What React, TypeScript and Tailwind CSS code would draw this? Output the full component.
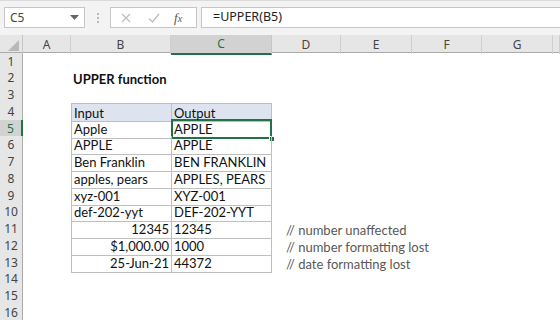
import React from 'react';

const cols = ['A', 'B', 'C', 'D', 'E', 'F', 'G', 'H'];

type Cell = { text: string; right?: boolean; bold?: boolean; note?: boolean };

// sheet content by row number -> column letter
const data: Record<number, Record<string, Cell>> = {
  2: { B: { text: 'UPPER function', bold: true } },
  4: { B: { text: 'Input' }, C: { text: 'Output' } },
  5: { B: { text: 'Apple' }, C: { text: 'APPLE' } },
  6: { B: { text: 'APPLE' }, C: { text: 'APPLE' } },
  7: { B: { text: 'Ben Franklin' }, C: { text: 'BEN FRANKLIN' } },
  8: { B: { text: 'apples, pears' }, C: { text: 'APPLES, PEARS' } },
  9: { B: { text: 'xyz-001' }, C: { text: 'XYZ-001' } },
  10: { B: { text: 'def-202-yyt' }, C: { text: 'DEF-202-YYT' } },
  11: { B: { text: '12345', right: true }, C: { text: '12345' }, D: { text: '// number unaffected', note: true } },
  12: { B: { text: '$1,000.00', right: true }, C: { text: '1000' }, D: { text: '// number formatting lost', note: true } },
  13: { B: { text: '25-Jun-21', right: true }, C: { text: '44372' }, D: { text: '// date formatting lost', note: true } },
};

const rows = Array.from({ length: 16 }, (_, i) => i + 1);

const gridCols = 'grid grid-cols-[23px_48px_100px_101px_69px_71px_70px_71px_1fr]';

function Toolbar() {
  return (
    <div className="h-[35px] bg-[#f3f3f3] border-t border-[#dadada] flex items-start pt-[6px] font-['Noto_Sans',sans-serif] text-[12px] text-[#444]">
      <div className="ml-[4px] w-[81px] h-[21px] bg-white border border-[#c6c6c6] flex items-center justify-between pl-[5px] pr-[5px]">
        <span>C5</span>
        <svg width="9" height="5" viewBox="0 0 9 5"><path d="M0 0h9L4.5 5z" fill="#666" /></svg>
      </div>
      <div className="w-[25px] h-[21px] flex flex-col items-center justify-center gap-[2px]">
        <span className="w-[2px] h-[2px] bg-[#bbb]" />
        <span className="w-[2px] h-[2px] bg-[#bbb]" />
        <span className="w-[2px] h-[2px] bg-[#bbb]" />
      </div>
      <div className="w-[87px] h-[21px] bg-white border border-[#c6c6c6] flex items-center">
        <svg className="ml-[10px]" width="10" height="10" viewBox="0 0 10 10">
          <path d="M1 1l8 8M9 1l-8 8" stroke="#bdbdbd" strokeWidth="1.2" />
        </svg>
        <svg className="ml-[17px]" width="12" height="10" viewBox="0 0 12 10">
          <path d="M1 5.5l3.5 3.5L11 1" stroke="#bdbdbd" strokeWidth="1.3" fill="none" />
        </svg>
        <span className="ml-[14px] italic font-['Liberation_Serif',serif] text-[13px] text-[#555]">
          f<span className="text-[10px]">x</span>
        </span>
      </div>
      <div className="ml-[4px] flex-1 h-[21px] bg-white border border-[#c6c6c6] border-r-0 flex items-center pl-[11px] font-['Noto_Sans',sans-serif] text-[12.5px] text-[#222]">
        =UPPER(B5)
      </div>
    </div>
  );
}

function HeaderRow() {
  return (
    <div className={`${gridCols} h-[18px] bg-[#e6e6e6] border-b border-[#ababab] font-['Noto_Sans',sans-serif] text-[12px] text-[#444]`}>
      <div className="relative border-r border-[#c6c6c6]">
        <svg className="absolute right-[3px] bottom-[3px]" width="11" height="11" viewBox="0 0 11 11">
          <path d="M11 0v11H0z" fill="#b8b8b8" />
        </svg>
      </div>
      {cols.map((c) =>
        c === 'C' ? (
          <div key={c} className="flex items-center justify-center bg-[#d2d2d2] text-[#217346] border-b-2 border-[#217346] border-r border-r-[#c6c6c6] -mb-px">
            {c}
          </div>
        ) : (
          <div key={c} className="flex items-center justify-center border-r border-[#cfcfcf]">
            {c === 'H' ? '' : c}
          </div>
        )
      )}
    </div>
  );
}

function SheetRow({ n }: { n: number }) {
  const h = n % 4 === 1 ? 'h-[16px]' : 'h-[17px]';
  const inTable = n >= 4 && n <= 13;
  const r = data[n] || {};
  return (
    <div className={`${gridCols} ${h}`}>
      {n === 5 ? (
        <div className="flex items-center justify-center bg-[#d2d2d2] text-[#217346] border-r-2 border-[#217346] border-b border-b-[#d8d8d8] font-['Noto_Sans',sans-serif] text-[12px]">
          {n}
        </div>
      ) : (
        <div className="flex items-center justify-center bg-[#e6e6e6] text-[#444] border-r border-[#ababab] border-b border-b-[#d8d8d8] font-['Noto_Sans',sans-serif] text-[12px]">
          {n}
        </div>
      )}
      {cols.map((c) => {
        const cell = r[c];
        const tableCell = inTable && (c === 'B' || c === 'C');
        let cls = 'relative flex items-center whitespace-nowrap overflow-visible font-[Lato,sans-serif] text-[13px] leading-none pt-[1px] text-[#111] px-[2px]';
        if (tableCell) {
          cls += ' border-b border-[#bfbfbf] border-l';
          if (c === 'C') cls += ' border-r';
          if (n === 4) cls += ' border-t bg-[#dde4f0]';
        }
        if (cell?.right) cls += ' justify-end';
        if (cell?.bold) cls += ' font-bold';
        if (cell?.note) cls += ' pl-[14px] text-[#595959]';
        return (
          <div key={c} className={cls}>
            {cell && <span className="relative z-10">{cell.text}</span>}
            {n === 5 && c === 'C' && (
              <>
                <div className="absolute -left-px -top-px -right-px -bottom-px border-2 border-[#217346] pointer-events-none" />
                <div className="absolute -right-[4px] -bottom-[4px] w-[6px] h-[6px] bg-[#217346] border border-white" />
              </>
            )}
          </div>
        );
      })}
    </div>
  );
}

export default function App() {
  return (
    <div className="w-[560px] h-[320px] overflow-hidden bg-white">
      <Toolbar />
      <HeaderRow />
      {rows.map((n) => (
        <SheetRow key={n} n={n} />
      ))}
    </div>
  );
}
